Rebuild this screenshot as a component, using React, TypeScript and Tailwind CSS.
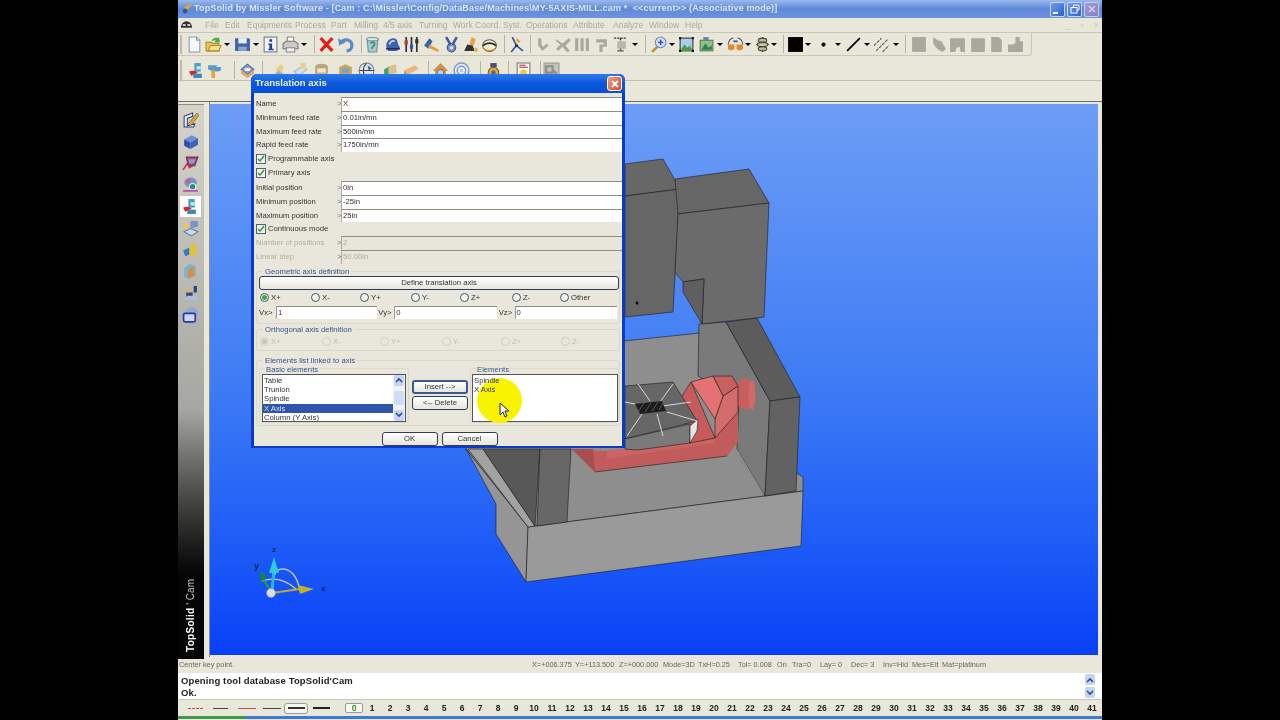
import React from 'react';

const font = "font-['Liberation_Sans',Arial,sans-serif]";

// small toolbar drawings, all on a 16x16 grid
const ICONS: Record<string, React.ReactNode> = {
  doc: <><path d="M3 1h7l3 3v11H3z" fill="#f4f6fb" stroke="#8d9ab4" /><path d="M10 1v3h3" fill="#c9d3e8" stroke="#8d9ab4" /></>,
  open: <><path d="M1 6h5l1 1h6v7H1z" fill="#eec95a" stroke="#a98a2c" /><path d="M3 14l2-5h10l-2 5z" fill="#f7e08c" stroke="#a98a2c" /><path d="M6 5c1-3 4-4 6-3l1-1 1 5-5 0 1-2c-1 0-3 0-4 1z" fill="#4fa83c" /></>,
  save: <><path d="M1 2h13l1 1v11H1z" fill="#3f62a8" /><rect x="4" y="2" width="8" height="5" fill="#e8ecf4" /><rect x="4" y="10" width="8" height="4" fill="#8ea2cc" /></>,
  info: <><rect x="2" y="1" width="12" height="14" fill="#f2f4fa" stroke="#6e7a94" /><rect x="7" y="3" width="2.5" height="2.5" fill="#1f3ea0" /><path d="M6 7h3.5v5H11v1.5H6V12h1V8.5H6z" fill="#1f3ea0" /></>,
  print: <><path d="M5 1h6v5H5z" fill="#f5f5f5" stroke="#8a8a8a" /><path d="M1 7l3-2h8l3 2v5H1z" fill="#c9c9c9" stroke="#777" /><path d="M4 11h8v4H4z" fill="#eee" stroke="#888" /></>,
  cross: <path d="M2.5 2l11 12M13.5 2l-11 12" stroke="#e0201c" strokeWidth="3" fill="none" />,
  undo: <><path d="M4 6c3-4 10-3 10 3 0 3-2 5-5 5" stroke="#5c88cc" strokeWidth="3" fill="none" /><path d="M1 2l1 7 6-3z" fill="#5c88cc" /></>,
  bin: <><path d="M3 3h10l-1 12H4z" fill="#a9c9d8" stroke="#6f8d9c" /><ellipse cx="8" cy="3" rx="5.5" ry="1.6" fill="#d8e8ee" stroke="#6f8d9c" /><path d="M6 7c2-2 4-1 4 1l-3 4" stroke="#2f9a4c" strokeWidth="1.6" fill="none" /></>,
  cap: <><path d="M2 10c0-6 4-8 7-8 3 0 4 3 4 5l2 4-3 3H4z" fill="#3f62b0" /><path d="M5 8c1-3 3-4 5-3" stroke="#cfdcf2" strokeWidth="1.6" fill="none" /><path d="M2 12h13" stroke="#1d2f66" strokeWidth="1.5" /></>,
  tools: <><path d="M3 1v14M8 1v14M13 1v14" stroke="#333" strokeWidth="1.6" /><rect x="1.5" y="4" width="3" height="4" fill="#b23a2c" /><rect x="6.5" y="8" width="3" height="4" fill="#2f55a8" /><rect x="11.5" y="3" width="3" height="4" fill="#333" /></>,
  hammer: <><path d="M1 9l5-7 3 3-4 7z" fill="#3b63b0" /><path d="M6 8l9 5-1 2-9-4z" fill="#e2a13a" /></>,
  medal: <><circle cx="8" cy="11" r="4" fill="#7d8fbe" stroke="#3a4d88" /><path d="M3 1l4 7M13 1L9 8" stroke="#3f5aa6" strokeWidth="2.4" /><circle cx="8" cy="11" r="1.6" fill="#dce3f2" /></>,
  figure: <><path d="M9 1l4 2-2 6-4-1z" fill="#e8a53c" /><path d="M2 14l3-6 5 1 2 5z" fill="#333" /><circle cx="13" cy="13" r="2" fill="#e0b45a" /></>,
  ring: <><ellipse cx="8" cy="9" rx="6.5" ry="5.5" fill="#f5efd0" stroke="#555" /><path d="M2 9c3-3 9-3 12 0" stroke="#222" strokeWidth="1.6" fill="none" /><path d="M3 12c3 2 7 2 10 0" stroke="#d8a232" strokeWidth="1.4" fill="none" /></>,
  axes: <><path d="M4 1l4 8 6 5M8 9l-5 6" stroke="#2f55a8" strokeWidth="1.6" fill="none" /><path d="M8 3l3 3" stroke="#d8a232" strokeWidth="2" /><circle cx="8" cy="9" r="1.5" fill="#333" /></>,
  g1: <path d="M3 2v7l4 5 6-5-2-2-3 3-2-2V2z" fill="#a8a89e" />,
  g2: <path d="M1 3l6 4 6-5 2 2-5 5 4 5-3 1-4-5-4 4-2-2 4-4-4-3z" fill="#aaa99f" />,
  g3: <path d="M2 2h3v12H2zM7 2h3v12H7zM12 2h3v12h-3z" fill="#a8a89e" />,
  g4: <path d="M3 3h10v7H9v5H6V8h4V6H3z" fill="#a8a89e" />,
  tee: <><path d="M2 2h12M8 2v12" stroke="#333" strokeWidth="1.4" strokeDasharray="2 1" /><rect x="5" y="5" width="8" height="7" fill="#b7b6aa" /><path d="M5 14h6" stroke="#333" /></>,
  zoom: <><path d="M8 9l-6 6" stroke="#c8893c" strokeWidth="2.4" /><circle cx="10" cy="6" r="5" fill="#cfdcf5" stroke="#6f86b8" /><path d="M10 3.5v5M7.5 6h5" stroke="#2f55a8" strokeWidth="1.4" /></>,
  fit: <><rect x="2" y="2" width="12" height="12" fill="#a8cfe8" stroke="#333" /><path d="M2 14l4-6 3 3 2-2 3 5z" fill="#4e9c48" /><path d="M1 1h2v2H1zM13 1h2v2h-2zM1 13h2v2H1zM13 13h2v2h-2z" fill="#111" /></>,
  scene: <><rect x="2" y="4" width="12" height="10" fill="#8fc07c" stroke="#5c7a58" /><path d="M3 13l4-6 3 4 3-2v4z" fill="#2f7e54" /><path d="M5 1h5v3H5z" fill="#5a84c8" /></>,
  glasses: <><path d="M1 8c1-5 3-6 5-6M15 8c-1-5-3-6-5-6" stroke="#555" fill="none" /><path d="M1 8h6v4c-2 2-5 2-6 0z" fill="#e08a2c" /><path d="M9 8h6v4c-2 2-5 2-6 0z" fill="#e08a2c" /><path d="M6 5h4" stroke="#2f55a8" strokeWidth="1.6" /></>,
  spool: <><path d="M8 1v14M2 8h12" stroke="#333" /><ellipse cx="8" cy="4" rx="4" ry="2" fill="#b9b98c" stroke="#444" /><ellipse cx="8" cy="8" rx="5" ry="2" fill="#c9c99c" stroke="#444" /><ellipse cx="8" cy="12" rx="4" ry="2" fill="#b9b98c" stroke="#444" /></>,
  square: <rect x="1" y="1" width="14" height="14" fill="#000" />,
  dot: <circle cx="8" cy="8" r="2" fill="#000" />,
  line: <path d="M2 14L14 2" stroke="#000" strokeWidth="1.6" />,
  hatch: <path d="M1 9l7-7M3 14L14 3M9 15l6-6" stroke="#555" strokeDasharray="3 1" />,
  s1: <rect x="2" y="1" width="13" height="14" fill="#a9a89e" />,
  s2: <path d="M3 1l4 3 4 1 2 4 2 3-3 3-4-2-3-3-2-3z" fill="#a9a89e" />,
  s3: <path d="M1 2h14v13h-4l-1-5-3 1-1 4H1z" fill="#a9a89e" />,
  s4: <rect x="2" y="2" width="13" height="13" rx="1" fill="#a9a89e" />,
  s5: <path d="M3 1h7l3 3v11H3z" fill="#a9a89e" />,
  s6: <path d="M1 8h5l2-2V1h4v4h3v10H1z" fill="#a9a89e" />,
  mach: <><rect x="6" y="1" width="6" height="8" fill="#45a0c8" /><rect x="8" y="4" width="4" height="3" fill="#cde6f2" /><path d="M1 9c3-1 7-1 8 1l-6 3z" fill="#d8262a" /><rect x="5" y="11" width="8" height="4" fill="#3a88b8" /></>,
  tap: <><path d="M2 3h9l3 2v3l-3 1H7L2 7z" fill="#5a98c8" /><rect x="5" y="8" width="3.5" height="7" fill="#e8a53c" /><path d="M10 4h3" stroke="#e8f2fa" strokeWidth="1.4" /></>,
  box: <><path d="M2 7l6-5 6 5-6 5z" fill="#7f9ccc" stroke="#516a9c" /><path d="M2 7v4l6 4 6-4V7l-6 5z" fill="#e0a86a" /><ellipse cx="8" cy="7" rx="3" ry="1.6" fill="#f2f2f2" /></>,
  f1: <><path d="M3 8l5-6 3 2-2 6z" fill="#e8cf86" /><path d="M1 13l5-5 5 3-4 4z" fill="#9cb0d4" /></>,
  f2: <><path d="M2 9l8-5 4 3-8 6z" fill="#d6dff0" stroke="#a9b6cc" /><rect x="8" y="1" width="5" height="5" fill="#e8cf86" /></>,
  f3: <><path d="M2 4c3-3 9-3 12 0v7H2z" fill="#b8a678" /><rect x="4" y="6" width="8" height="4" fill="#f0e6c4" /></>,
  f4: <><path d="M2 5l6-3 6 3v7H2z" fill="#c4a860" /><rect x="5" y="6" width="6" height="4" fill="#7f9ccc" /></>,
  globe: <><circle cx="8" cy="8" r="7" fill="#dde4ee" stroke="#6f7d90" /><path d="M8 1c-4 4-4 10 0 14M1 8h14" stroke="#444" fill="none" /><path d="M9 3l4 3-3 2z" fill="#3f62a8" /></>,
  f5: <><path d="M2 14V7l5-3v7z" fill="#3fa06a" /><path d="M6 4l7-2 1 8-8 2z" fill="#d8c090" /></>,
  f6: <><path d="M1 8l10-5 4 3-10 6z" fill="#e8b878" /><path d="M1 8v6l4-1V12z" fill="#7f9ccc" /></>,
  house: <><path d="M8 1L1 8l2 1v5h10V9l2-1z" fill="#d8903c" /><circle cx="8" cy="10" r="3" fill="#bcd0ec" stroke="#5f7db0" /></>,
  target: <><circle cx="8" cy="8" r="7" fill="#e8ecf4" stroke="#7f9ccc" strokeWidth="1.4" /><circle cx="8" cy="8" r="4" fill="none" stroke="#7f9ccc" strokeWidth="1.4" /><circle cx="8" cy="8" r="1.4" fill="#a9b8d4" /></>,
  bottle: <><rect x="5" y="1" width="6" height="4" fill="#44507a" /><circle cx="8" cy="10" r="5" fill="#e0a632" stroke="#6f5a2c" /><circle cx="8" cy="10" r="2" fill="#3f62a8" /></>,
  paper: <><path d="M2 1h12v14H2z" fill="#f4f4f0" stroke="#777" /><path d="M4 3h6M4 5h8" stroke="#a33" /><circle cx="8" cy="10" r="3" fill="#e8cc40" /></>,
  gdoc: <><rect x="1" y="1" width="14" height="14" fill="#c4c3b8" stroke="#9a998e" /><path d="M3 4h6v6H3zM10 8l4 5" stroke="#8e8d82" strokeWidth="2" fill="none" /></>,
  pencil: <><path d="M2 5l8-3v3L5 7v7l7-2-1 3H2z" fill="#f3f3f3" stroke="#28408a" /><path d="M6 12L14 2l2 2-8 10z" fill="#e0a632" stroke="#6c4e1c" strokeWidth=".6" /></>,
  cube: <><path d="M2 6l7-4 6 3-7 4z" fill="#6f8fd8" /><path d="M2 6l6 3v6l-6-3z" fill="#2c4fa8" /><path d="M8 9l7-4v6l-7 4z" fill="#3c60bc" /></>,
  frame: <><path d="M4 2h11l-3 8H6z" fill="#a04a6a" stroke="#7c2c50" /><path d="M6 4h7l-2 4H7z" fill="#7fa0dc" /><path d="M1 14l4-6 2 4 3-2" stroke="#c82c40" strokeWidth="1.4" fill="none" /></>,
  gear: <><ellipse cx="8" cy="6" rx="6" ry="4.5" fill="#7c8fcc" /><circle cx="6" cy="5" r="2" fill="#d85878" /><circle cx="10" cy="10" r="3" fill="#2f8c80" stroke="#cfe" /><path d="M1 14h14" stroke="#c040a0" strokeWidth="1.5" /></>,
  sheets: <><path d="M2 3h4v6H2z" fill="#e8c850" /><path d="M8 1h7v5l-7 2z" fill="#7f90c8" /><path d="M2 11l6-3 7 3-6 4z" fill="#c8d8ee" stroke="#5f7db0" /></>,
  wedge: <><path d="M1 9l6-3v7l-4 1z" fill="#2f7cc4" /><path d="M7 6l5-5 2 11-7 2z" fill="#e8c030" /></>,
  book: <><path d="M2 5l5-4 6 2v9l-7 3-4-2z" fill="#7cb0d8" /><path d="M6 6l5-2v8l-5 2z" fill="#e88c1c" /></>,
  plot: <><path d="M4 7h6v5H4z" fill="#446" /><path d="M11 1h3v6h-3z" fill="#2c3c80" /><path d="M1 14l4-4h9l1 4z" fill="#a8c0e0" /><path d="M6 3v4" stroke="#d8c040" strokeWidth="2" /></>,
  rect: <><circle cx="9" cy="6" r="6" fill="#9aa8c8" /><rect x="1.5" y="6" width="11" height="8" rx="1.5" fill="#cfd8f0" stroke="#2238b8" strokeWidth="1.6" /></>,
};

function Ico({ name, size = 'w-[17px] h-[17px] -mx-[0.5px]' }: { name: string; size?: string }) {
  return <svg viewBox="0 0 16 16" className={`${size} shrink-0 block`}>{ICONS[name]}</svg>;
}

const ML: Record<number, string> = {
  0: '', 1: 'ml-px', 2: 'ml-0.5', 3: 'ml-[3px]', 4: 'ml-1', 5: 'ml-[5px]', 6: 'ml-1.5', 7: 'ml-[7px]', 8: 'ml-2',
  9: 'ml-[9px]', 11: 'ml-[11px]', 12: 'ml-3',
};

type Tool = [string, number];

const ROW1: Tool[] = [
  ['doc', 0], ['open', 3], ['>', 3], ['save', 4], ['>', 3], ['info', 3], ['print', 4], ['>', 3], ['|', 7],
  ['cross', 3], ['undo', 3], ['|', 8], ['bin', 2], ['cap', 4], ['tools', 3], ['hammer', 4], ['medal', 4],
  ['figure', 3], ['ring', 3], ['|', 7], ['axes', 3], ['|', 6], ['g1', 4], ['g2', 4], ['g3', 2], ['g4', 4],
  ['tee', 3], ['>', 4], ['|', 7], ['zoom', 4], ['>', 3], ['fit', 3], ['scene', 4], ['>', 3], ['glasses', 4],
  ['>', 2], ['spool', 3], ['>', 1], ['|', 6], ['square', 3], ['>', 2], ['dot', 4], ['>', 4], ['line', 4],
  ['>', 3], ['hatch', 3], ['>', 4], ['|', 6], ['s1', 4], ['s2', 4], ['s3', 3], ['s4', 4], ['s5', 3], ['s6', 3],
];

const ROW2: Tool[] = [
  ['mach', 6], ['tap', 2], ['|', 12], ['box', 4], ['|', 7], ['f1', 9], ['f2', 4], ['f3', 5], ['f4', 8],
  ['globe', 5], ['f5', 8], ['f6', 5], ['|', 9], ['house', 3], ['target', 5], ['|', 11], ['bottle', 4], ['|', 7],
  ['paper', 6], ['|', 9], ['gdoc', 2],
];

function ToolRow({ items }: { items: Tool[] }) {
  return (
    <>
      {items.map(([n, m], i) => {
        if (n === '>') return <div key={i} className={`${ML[m]} w-1.5 h-0 border-x-[3px] border-x-transparent border-t-[3px] border-t-black shrink-0`} />;
        if (n === '|') return <div key={i} className={`${ML[m]} w-px h-[18px] bg-[#b5b3a4] shrink-0`} />;
        return <div key={i} className={ML[m]}><Ico name={n} /></div>;
      })}
    </>
  );
}

const MENU: [string, string][] = [
  ['File', 'w-5'], ['Edit', 'w-[22px]'], ['Equipments', 'w-12'], ['Process', 'w-9'], ['Part', 'w-[23px]'], ['Milling', 'w-[29px]'],
  ['4/5 axis', 'w-9'], ['Turning', 'w-[34px]'], ['Work Coord. Syst.', 'w-[73px]'], ['Operations', 'w-[47px]'],
  ['Attribute', 'w-10'], ['Analyze', 'w-9'], ['Window', 'w-9'], ['Help', 'w-6'],
];

const SIDE = ['pencil', 'cube', 'frame', 'gear', 'mach', 'sheets', 'wedge', 'book', 'plot', 'rect'];

const STATUS: [string, string][] = [
  ['X=+006.375', 'w-[43px]'], ['Y=+113.500', 'w-11'], ['Z=+000.000', 'w-11'], ['Mode=3D', 'w-[35px]'], ['TxH=0.25', 'w-10'],
  ['Tol= 0.008', 'w-[39px]'], ['On', 'w-[15px]'], ['Tra=0', 'w-7'], ['Lay= 0', 'w-[31px]'], ['Dec= 3', 'w-8'],
  ['Inv=Hid', 'w-[29px]'], ['Mes=Elt', 'w-[30px]'], ['Mat=platinum', 'w-[44px]'],
];

const NUMS = Array.from({ length: 41 }, (_, i) => i + 1);

function Scene() {
  const e = { stroke: '#1c1c1c', strokeWidth: 0.6, strokeLinejoin: 'round' as const };
  return (
    <svg viewBox="210 105 888 551" className="w-full h-full block">
      {/* base */}
      <polygon points="500,355 700,334 790,470 803,478 803,492 528,528 466,450" fill="#8e8e8e" {...e} />
      <polygon points="466,450 528,528 526,583 496,535 496,505" fill="#959595" {...e} />
      <polygon points="528,528 803,492 801,547 526,583" fill="#9a9a9a" {...e} />
      {/* left upright */}
      <polygon points="468,450 528,528 535,527 483,450" fill="#a2a2a2" {...e} />
      <polygon points="483,450 535,527 540,450" fill="#585858" {...e} />
      <polygon points="537,527 567,523 571,450 540,450" fill="#676767" {...e} />
      {/* right upright */}
      <polygon points="699,325 726,323 770,402 765,497 737,450 739,400 698,377" fill="#7a7a7a" {...e} />
      <polygon points="737,450 765,497 740,462" fill="#8b8b8b" />
      <polygon points="726,323 757,319 800,398 770,402" fill="#5c5c5c" {...e} />
      <polygon points="770,402 800,398 796,492 765,497" fill="#626262" {...e} />
      {/* cradle */}
      <polygon points="572,450 595,473 727,457 738,443 738,410 715,439 607,452" fill="#c25c5c" />
      <polygon points="572,450 595,473 593,450" fill="#a84e4e" />
      <polygon points="607,452 715,437 715,444 607,460" fill="#cc6464" />
      <path d="M595 473L727 457" {...e} fill="none" />
      <polygon points="691,383 715,439 690,444 680,400" fill="#c75b5b" {...e} />
      <rect x="738" y="380" width="15" height="30" rx="5" fill="#c85f5f" />
      <ellipse cx="752" cy="396" rx="3.5" ry="15" fill="#cf6a6a" />
      <polygon points="723,397 738,387 738,413 715,439 715,420" fill="#d46c6c" {...e} />
      <polygon points="713,377 732,377 738,387 723,397" fill="#c96060" {...e} />
      <polygon points="691,383 713,377 723,397 715,420" fill="#e47272" {...e} />
      {/* rotary table */}
      <polygon points="625,387 673,383 697,422 625,440" fill="#666" {...e} />
      <polygon points="625,440 690,425 690,444 637,451 625,450" fill="#7a7a7a" {...e} />
      <polygon points="690,427 698,420 697,432 690,444" fill="#e6e6e6" {...e} />
      <path d="M673 385L660 403M638 385L650 402M667 413L697 422M657 415L663 437M642 415L627 437M635 405L625 403M663 407L691 403" stroke="#d8d8d8" strokeWidth="1" fill="none" />
      <polygon points="635,405 662,402 666,412 640,415" fill="#1d1d1d" />
      <path d="M638 413l6-9M645 413l6-9M652 412l6-9M659 411l5-8" stroke="#666" strokeWidth="0.8" />
      {/* column and head */}
      <polygon points="625,165 663,160 680,190 625,197" fill="#676767" {...e} />
      <polygon points="625,197 680,190 673,313 625,318" fill="#666" {...e} />
      <polygon points="675,180 749,170 769,204 678,215" fill="#666" {...e} />
      <polygon points="678,215 769,204 764,318 702,325 704,280 683,283 675,273" fill="#6b6b6b" {...e} />
      <polygon points="683,283 704,280 702,325 683,293" fill="#5f5f5f" {...e} />
      <circle cx="637" cy="304" r="1.5" fill="#000" />
      {/* triad */}
      <path d="M272 594Q272 570 282 570Q296 570 300 592" stroke="#b9c2d6" strokeWidth="1.5" fill="none" />
      <path d="M262 582Q280 576 296 590" stroke="#c8d4ea" strokeWidth="1.2" fill="none" />
      <path d="M272 594L274 568" stroke="#28b6d8" strokeWidth="3" />
      <polygon points="274,558 269,574 279,574" fill="#2ecae8" />
      <path d="M272 594L262 578" stroke="#2a9c3a" strokeWidth="2.2" />
      <polygon points="260,573 261,583 267,577" fill="#128a2a" />
      <path d="M272 594L300 590" stroke="#b8aa2c" strokeWidth="2.2" />
      <polygon points="314,590 298,586 300,595" fill="#c4b028" />
      <circle cx="271" cy="594" r="4.5" fill="#d8dce4" stroke="#8a8f9c" strokeWidth=".5" />
      <text x="272" y="553" fontSize="8" fontWeight="bold" fill="#14224e" fontFamily="Liberation Sans">z</text>
      <text x="254" y="570" fontSize="9" fontWeight="bold" fill="#14224e" fontFamily="Liberation Sans">y</text>
      <text x="321" y="592" fontSize="8" fontWeight="bold" fill="#14224e" fontFamily="Liberation Sans">x</text>
    </svg>
  );
}

function Field({ label, value, off }: { label: string; value: string; off?: boolean }) {
  return (
    <div className={`flex items-stretch h-[13.75px] ${off ? 'text-[#b0afa5]' : 'text-[#333]'}`}>
      <span className="w-[83px] pl-0.5 leading-[13px]">{label}</span>
      <span className="w-1 leading-[13px] text-[#777]">&gt;</span>
      <span className={`flex-1 border-t border-t-[#8d8d85] border-l border-l-[#aaa] pl-px leading-[12px] ${off ? 'bg-[#e8e6da]' : 'bg-white'}`}>{value}</span>
    </div>
  );
}

function Check({ label }: { label: string }) {
  return (
    <div className="flex items-center h-3.5 pl-0.5 text-[#333]">
      <span className="w-[10px] h-[10px] border border-[#51617c] bg-[#f4f4ec] flex items-center justify-center mr-[2px]">
        <svg viewBox="0 0 8 8" className="w-2 h-2"><path d="M1 4l2 2 4-5" stroke="#2c9a34" strokeWidth="1.5" fill="none" /></svg>
      </span>
      {label}
    </div>
  );
}

function Radio({ label, on, off, cls }: { label: string; on?: boolean; off?: boolean; cls: string }) {
  return (
    <div className={`${cls} flex items-center shrink-0 ${off ? 'text-[#bdbcb2]' : 'text-[#333]'}`}>
      <span className={`w-[9px] h-[9px] rounded-full border flex items-center justify-center mr-0.5 ${off ? 'border-[#d2d0c4]' : 'border-[#40566f] bg-[#f6f6f0]'}`}>
        {on && <span className={`w-[5px] h-[5px] rounded-full ${off ? 'bg-[#c4c3b8]' : 'bg-[#3eaa3e]'}`} />}
      </span>
      {label}
    </div>
  );
}

function Btn({ children, cls }: { children: React.ReactNode; cls: string }) {
  return (
    <div className={`${cls} rounded-[3px] border border-[#2f3c52] bg-gradient-to-b from-white to-[#e6e5da] flex items-center justify-center text-[#333] shrink-0`}>
      {children}
    </div>
  );
}

function Dialog() {
  return (
    <div className={`absolute left-[73px] top-[74px] w-[374px] h-[374px] rounded-t-md bg-[#0b3fd0] border-x-[3px] border-b-[3px] border-[#0a3bc4] flex flex-col text-[7.7px] ${font}`}>
      <div className="h-[19px] -mx-[3px] rounded-t-md bg-gradient-to-b from-[#2f78ea] via-[#0a57dc] to-[#0a4fd6] flex items-center pl-[4px] pr-[3px] shrink-0">
        <span className="text-[9.5px] font-bold text-[#e8f0ff]">Translation axis</span>
        <span className="ml-auto w-[15px] h-[15px] rounded-[3px] border border-white bg-gradient-to-br from-[#ee9a7e] to-[#d84a20] flex items-center justify-center">
          <svg viewBox="0 0 10 10" className="w-[10px] h-[10px]"><path d="M2 2l6 6M8 2l-6 6" stroke="#fff" strokeWidth="1.8" /></svg>
        </span>
      </div>
      <div className="flex-1 bg-[#e9e7db] flex flex-col pt-1">
        <Field label="Name" value="X" />
        <Field label="Minimum feed rate" value="0.01in/mn" />
        <Field label="Maximum feed rate" value="500in/mn" />
        <Field label="Rapid feed rate" value="1750in/mn" />
        <Check label="Programmable axis" />
        <Check label="Primary axis" />
        <div className="h-px" />
        <Field label="Initial position" value="0in" />
        <Field label="Minimum position" value="-25in" />
        <Field label="Maximum position" value="25in" />
        <Check label="Continuous mode" />
        <Field label="Number of positions" value="2" off />
        <Field label="Linear step" value="50.00in" off />

        <div className="mt-[7px] mx-0.5 h-[53px] border border-[#dbd9cc] rounded-[3px] px-0.5 flex flex-col shrink-0">
          <div className="-mt-[6px] ml-1 h-[11px] leading-[11px] text-[#35548c] shrink-0">
            <span className="bg-[#e9e7db] px-0.5">Geometric axis definition</span>
          </div>
          <Btn cls="h-[14px] w-[360px] -mt-[1px]">Define translation axis</Btn>
          <div className="flex h-4 items-center pl-px">
            <Radio label="X+" on cls="w-[51px]" />
            <Radio label="X-" cls="w-[49px]" />
            <Radio label="Y+" cls="w-[51px]" />
            <Radio label="Y-" cls="w-[49px]" />
            <Radio label="Z+" cls="w-[52px]" />
            <Radio label="Z-" cls="w-[48px]" />
            <Radio label="Other" cls="w-10" />
          </div>
          <div className="flex h-[13px] items-stretch text-[#333]">
            <span className="w-[17px] leading-[13px]">Vx&gt;</span>
            <span className="w-[102px] bg-white border-t border-t-[#8d8d85] border-l border-l-[#999] pl-px leading-[12px]">1</span>
            <span className="w-[17px] pl-px leading-[13px]">Vy&gt;</span>
            <span className="w-[103px] bg-white border-t border-t-[#8d8d85] border-l border-l-[#999] pl-px leading-[12px]">0</span>
            <span className="w-[18px] pl-0.5 leading-[13px]">Vz&gt;</span>
            <span className="w-[103px] bg-white border-t border-t-[#8d8d85] border-l border-l-[#999] pl-px leading-[12px]">0</span>
          </div>
        </div>

        <div className="mt-[5px] mx-0.5 h-[22px] border border-[#dbd9cc] rounded-[3px] px-0.5 flex flex-col shrink-0">
          <div className="-mt-[6px] ml-1 h-[11px] leading-[11px] text-[#35548c] shrink-0">
            <span className="bg-[#e9e7db] px-0.5">Orthogonal axis definition</span>
          </div>
          <div className="flex h-3.5 items-center pl-px">
            <Radio label="X+" on off cls="w-[62px]" />
            <Radio label="X-" off cls="w-[58px]" />
            <Radio label="Y+" off cls="w-[62px]" />
            <Radio label="Y-" off cls="w-[59px]" />
            <Radio label="Z+" off cls="w-[60px]" />
            <Radio label="Z-" off cls="w-8" />
          </div>
        </div>

        <div className="mt-[9px] mx-0.5 h-[66px] border border-[#dbd9cc] rounded-[3px] px-0.5 flex flex-col shrink-0">
          <div className="-mt-[6px] ml-1 h-[11px] leading-[11px] text-[#35548c] shrink-0">
            <span className="bg-[#e9e7db] px-0.5">Elements list linked to axis</span>
          </div>
          <div className="flex mt-0.5">
            <div className="w-[150px] h-[55px] border border-[#dbd9cc] rounded-[3px] shrink-0 flex flex-col items-center">
              <div className="self-start -mt-[4px] ml-[5px] h-[9px] leading-[9px] text-[#35548c]"><span className="bg-[#e9e7db] px-px">Basic elements</span></div>
              <div className="w-[144px] h-[48px] bg-white border border-[#555] flex text-[#333] overflow-hidden">
                <div className="flex-1 leading-[9.3px] pt-px">
                  <div className="pl-px">Table</div>
                  <div className="pl-px">Trunion</div>
                  <div className="pl-px">Spindle</div>
                  <div className="pl-px bg-[#2f56a8] text-[#d8e0f4]">X Axis</div>
                  <div className="pl-px">Column (Y Axis)</div>
                </div>
                <div className="w-3 bg-[#f0f2fa] flex flex-col justify-between items-center">
                  <span className="w-2.5 h-[11px] bg-[#c4d4f4] rounded-[2px] flex items-center justify-center"><svg viewBox="0 0 8 6" className="w-2 h-1.5"><path d="M1 5l3-3 3 3" stroke="#2f4c8c" strokeWidth="1.6" fill="none" /></svg></span>
                  <span className="w-2.5 h-[14px] bg-[#cfdcf6] rounded-[2px]" />
                  <span className="w-2.5 h-[11px] bg-[#c4d4f4] rounded-[2px] flex items-center justify-center"><svg viewBox="0 0 8 6" className="w-2 h-1.5"><path d="M1 1l3 3 3-3" stroke="#2f4c8c" strokeWidth="1.6" fill="none" /></svg></span>
                </div>
              </div>
            </div>
            <div className="w-[61px] pl-[3px] flex flex-col pt-3 shrink-0">
              <Btn cls="w-14 h-[14px] border-[#3a5a94] border-2">Insert --&gt;</Btn>
              <Btn cls="w-14 h-[14px] mt-[2px]">&lt;-- Delete</Btn>
            </div>
            <div className="w-[149px] h-[55px] border border-[#dbd9cc] rounded-[3px] shrink-0 flex flex-col">
              <div className="-mt-[4px] ml-[5px] h-[9px] leading-[9px] text-[#35548c]"><span className="bg-[#e9e7db] px-px">Elements</span></div>
              <div className="relative w-[146px] h-[48px] ml-px bg-white border border-[#555] text-[#333] leading-[9.3px] pt-px pl-px">
                <div className="absolute left-1 top-[3px] w-[45px] h-[45px] rounded-full bg-[#f8f400]" />
                <div className="relative">Spindle</div>
                <div className="relative">X Axis</div>
                <svg viewBox="0 0 10 16" className="absolute left-[26px] top-[27px] w-[10px] h-4">
                  <path d="M1 1v12l3-3 2 5 2-1-2-5h4z" fill="#f4f4f4" stroke="#111" strokeWidth="0.9" />
                </svg>
              </div>
            </div>
          </div>
        </div>

        <div className="flex justify-center gap-1 pl-[3px] mt-1.5">
          <Btn cls="w-14 h-[14px]">OK</Btn>
          <Btn cls="w-14 h-[14px]">Cancel</Btn>
        </div>
      </div>
    </div>
  );
}

export default function App() {
  return (
    <div className="w-screen h-screen bg-black flex justify-center overflow-hidden blur-[0.35px]">
      <div className={`relative w-[924px] h-[720px] bg-[#e9e7da] flex flex-col ${font}`}>
        {/* title bar */}
        <div className="h-[18px] shrink-0 bg-gradient-to-b from-[#9ab8ec] via-[#5f88d8] to-[#6c94de] flex items-center pl-[3px] pr-[2px]">
          <svg viewBox="0 0 12 12" className="w-3 h-3 shrink-0"><path d="M1 8c3-6 7-7 10-6-2 1-4 6-8 7z" fill="#e0a632" /><circle cx="4" cy="8" r="2.4" fill="#2f55a8" /></svg>
          <span className="ml-[1px] text-[9px] font-bold text-[#dbe6fa] tracking-[0.15px] whitespace-pre">{"TopSolid by Missler Software - [Cam : C:\\Missler\\Config/DataBase/Machines\\MY-5AXIS-MILL.cam *  <<current>> (Associative mode)]"}</span>
          <div className="ml-auto flex gap-0.5 pr-px">
            <span className="w-[15px] h-[15px] rounded-[2px] bg-gradient-to-br from-[#6f9cf0] to-[#2f5fd0] border border-[#c8d8f8] flex items-end pl-0.5 pb-0.5"><span className="w-[5px] h-0.5 bg-white" /></span>
            <span className="w-[15px] h-[15px] rounded-[2px] bg-gradient-to-br from-[#6f9cf0] to-[#2f5fd0] border border-[#c8d8f8] flex items-center justify-center">
              <svg viewBox="0 0 10 10" className="w-[10px] h-[10px]"><path d="M3.5 3V1h5.5v5H7" stroke="#fff" fill="none" /><rect x="1" y="3.5" width="6" height="5.5" stroke="#fff" fill="none" /></svg>
            </span>
            <span className="w-[15px] h-[15px] rounded-[2px] bg-gradient-to-br from-[#a09ad8] to-[#8480c8] border border-[#c8d0f0] flex items-center justify-center">
              <svg viewBox="0 0 8 8" className="w-2 h-2"><path d="M1 1l6 6M7 1L1 7" stroke="#d8d8f0" strokeWidth="1.4" /></svg>
            </span>
          </div>
        </div>

        {/* menu */}
        <div className="h-[15px] shrink-0 flex items-center pl-0.5 pr-[3px] text-[8.5px] text-[#aaa99f] border-b border-[#c9c7b8]">
          <svg viewBox="0 0 14 10" className="w-[13px] h-[10px] mr-3"><path d="M1 8c0-4 3-7 6-7s6 3 6 7z" fill="#333" /><rect x="3" y="4" width="3" height="2" fill="#ddd" /><rect x="8" y="4" width="3" height="2" fill="#ddd" /></svg>
          {MENU.map(([t, w]) => <span key={t} className={`${w} whitespace-nowrap shrink-0`}>{t}</span>)}
          <div className="ml-auto flex gap-2.5 text-[9px] text-[#c4c3b8] leading-none">
            <span>_</span><span>▫</span><span>×</span>
          </div>
        </div>

        {/* toolbars */}
        <div className="h-[23px] shrink-0 flex">
          <div className="w-[854px] flex items-center pl-0.5 border-b border-r border-[#c9c7b8] rounded-br-sm">
            <div className="w-0.5 h-[19px] border-x border-[#bdbbac] mr-1 shrink-0" />
            <ToolRow items={ROW1} />
          </div>
        </div>
        <div className="h-[25px] shrink-0 flex border-b border-[#c2c0b0]">
          <div className="flex items-center pl-0.5 pt-1 h-[24px]">
            <div className="w-0.5 h-5 border-x border-[#bdbbac] shrink-0" />
            <ToolRow items={ROW2} />
          </div>
        </div>
        <div className="h-[21px] shrink-0 border-b border-[#6f6e66]" />

        {/* workspace */}
        <div className="flex h-[555px] shrink-0">
          <div className="w-[26px] h-full mt-0.5 border-t border-[#8d8c82] bg-gradient-to-b from-[#d6d4ca] via-[#a6a6a2] via-55% to-[#050505] to-85% flex flex-col items-center pr-0.5 relative">
            <div className="h-1" />
            {SIDE.map((s) => (
              <div key={s} className={`w-[21px] h-[21.7px] flex items-center justify-center ${s === 'mach' ? 'bg-white' : ''}`}>
                <Ico name={s} size="w-[17px] h-[17px]" />
              </div>
            ))}
            <div className="mt-auto mb-[7px] [writing-mode:vertical-rl] rotate-180 text-[10px] text-white whitespace-pre">
              <b className="tracking-[0.3px]">TopSolid</b><span className="text-[#c8c8c8]"> ' Cam</span>
            </div>
          </div>
          <div className="w-1.5 border-r border-[#8d8c82]" />
          <div className="w-[888px] h-[551px] mt-0.5 bg-gradient-to-b from-[#6c9df6] via-[#3f7cf4] via-50% to-[#0a3ff8]">
            <Scene />
          </div>
        </div>

        {/* status */}
        <div className="h-[16px] shrink-0 flex items-center pl-px text-[7.3px] text-[#666]">
          <span className="w-[353px] shrink-0">Center key point.</span>
          {STATUS.map(([t, w]) => <span key={t} className={`${w} whitespace-nowrap shrink-0`}>{t}</span>)}
        </div>

        {/* messages */}
        <div className="h-[26px] shrink-0 bg-white flex text-[9.5px] font-bold text-[#222] tracking-[0.12px] leading-[11.5px] pl-[3px] pt-0.5 pr-[7px]">
          <div>Opening tool database TopSolid'Cam<br />Ok.</div>
          <div className="ml-auto flex flex-col gap-0.5 -mt-px">
            <span className="w-[10px] h-[11px] bg-[#c4d4f4] rounded-[2px] flex items-center justify-center"><svg viewBox="0 0 8 6" className="w-2 h-1.5"><path d="M1 5l3-3 3 3" stroke="#2f4c8c" strokeWidth="1.6" fill="none" /></svg></span>
            <span className="w-[10px] h-[11px] bg-[#c4d4f4] rounded-[2px] flex items-center justify-center"><svg viewBox="0 0 8 6" className="w-2 h-1.5"><path d="M1 1l3 3 3-3" stroke="#2f4c8c" strokeWidth="1.6" fill="none" /></svg></span>
          </div>
        </div>

        {/* layers bar */}
        <div className="h-[17px] shrink-0 flex items-center border-t border-[#c9c7b8] text-[8.5px] font-bold text-[#222]">
          <span className="w-[10px]" />
          <span className="w-[15px] border-t border-dashed border-[#c0503c]" />
          <span className="w-[15px] ml-2.5 border-t border-[#444]" />
          <span className="w-[18px] ml-[10px] border-t border-[#c8583c]" />
          <span className="w-[18px] ml-[7px] border-t border-[#444]" />
          <span className="w-6 h-[11px] ml-[3px] rounded-[3px] border border-[#999] bg-[#f6f6f0] flex items-center justify-center"><span className="w-[17px] h-0.5 bg-[#333]" /></span>
          <span className="w-[17px] ml-[5px] h-0.5 bg-[#222]" />
          <span className="w-[15px]" />
          <span className="w-[18px] h-[10px] rounded-[2px] border border-[#999] bg-[#f8f8f2] text-[#2a9a2a] flex items-center justify-center">0</span>
          {NUMS.map((n) => <span key={n} className="w-[18px] text-center shrink-0">{n}</span>)}
        </div>
        <div className="h-[3px] shrink-0 flex bg-[#3f78d8]"><span className="w-[67px] bg-[#3f9a48]" /></div>

        <Dialog />
      </div>
    </div>
  );
}
